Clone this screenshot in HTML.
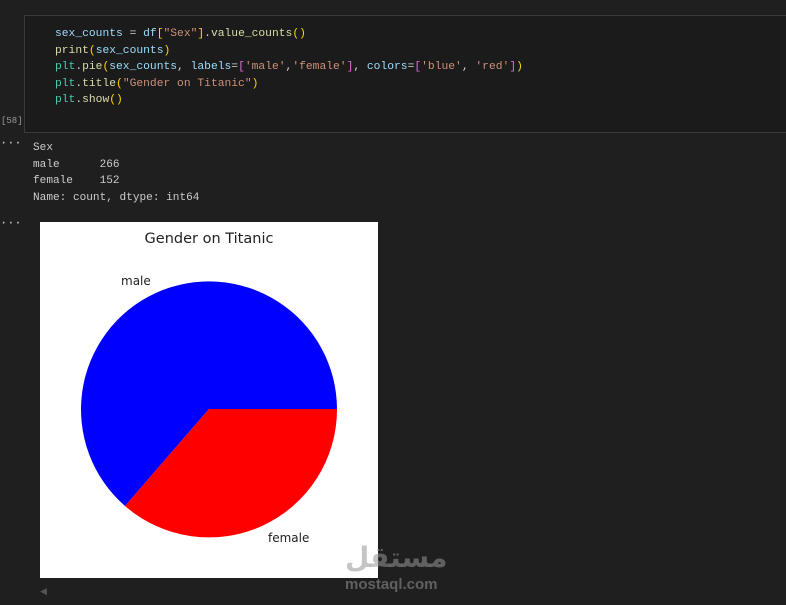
<!DOCTYPE html>
<html><head><style>
body{margin:0;width:786px;height:605px;background:#1f1f1f;position:relative;overflow:hidden;font-family:"Liberation Mono",monospace;}
.cell{position:absolute;left:24px;top:15px;width:770px;height:116px;border:1px solid #3a3a3a;background:#1b1b1b;}
.code{position:absolute;left:55px;top:26px;font-size:11.3px;line-height:16.5px;color:#d4d4d4;white-space:pre;}
.out{position:absolute;left:33px;top:140px;font-size:11.1px;line-height:16.5px;color:#cccccc;white-space:pre;}
.v{color:#9cdcfe}.f{color:#dcdcaa}.s{color:#ce9178}.y{color:#ffd700}.p{color:#da70d6}.b{color:#179fff}.g{color:#4ec9b0}
.dots{position:absolute;left:0;color:#ccc;font-size:12px;}
</style></head><body>
<div class="cell"></div>
<div class="code"><span class="v">sex_counts</span> = <span class="v">df</span><span class="y">[</span><span class="s">"Sex"</span><span class="y">]</span>.<span class="f">value_counts</span><span class="y">()</span>
<span class="f">print</span><span class="y">(</span><span class="v">sex_counts</span><span class="y">)</span>
<span class="g">plt</span>.<span class="f">pie</span><span class="y">(</span><span class="v">sex_counts</span>, <span class="v">labels</span>=<span class="p">[</span><span class="s">'male'</span>,<span class="s">'female'</span><span class="p">]</span>, <span class="v">colors</span>=<span class="p">[</span><span class="s">'blue'</span>, <span class="s">'red'</span><span class="p">]</span><span class="y">)</span>
<span class="g">plt</span>.<span class="f">title</span><span class="y">(</span><span class="s">"Gender on Titanic"</span><span class="y">)</span>
<span class="g">plt</span>.<span class="f">show</span><span class="y">()</span></div>
<div style="position:absolute;left:1px;top:116px;font-size:9px;color:#999">[58]</div>
<div class="dots" style="top:136px">···</div>
<div class="dots" style="top:216px">···</div>
<div class="out">Sex
male      266
female    152
Name: count, dtype: int64</div>
<svg style="position:absolute;left:40px;top:222px" width="338" height="356">
<rect width="338" height="356" fill="#fff"/>
<text x="169" y="21" font-family="DejaVu Sans,sans-serif" font-size="14.5" text-anchor="middle" fill="#222">Gender on Titanic</text>
<text x="81" y="63" font-family="DejaVu Sans,sans-serif" font-size="12" fill="#222">male</text>
<text x="228" y="320" font-family="DejaVu Sans,sans-serif" font-size="12" fill="#222">female</text>
<path d="M169 187 L297 187 A128 128 0 1 0 85 284 Z" fill="#0000ff"/>
<path d="M169 187 L85 284 A128 128 0 0 0 297 187 Z" fill="#ff0000"/>
</svg>
<div style="position:absolute;left:345px;top:541px;font-family:'Liberation Sans','DejaVu Sans',sans-serif;font-size:28px;font-weight:bold;color:rgba(150,150,150,0.55)">مستقل</div>
<div style="position:absolute;left:345px;top:576px;font-family:'Liberation Sans',sans-serif;font-size:15px;font-weight:bold;color:rgba(140,140,140,0.6)">mostaql.com</div>
<div style="position:absolute;left:40px;top:587px;color:#555;font-size:9px">◀</div>
</body></html>
